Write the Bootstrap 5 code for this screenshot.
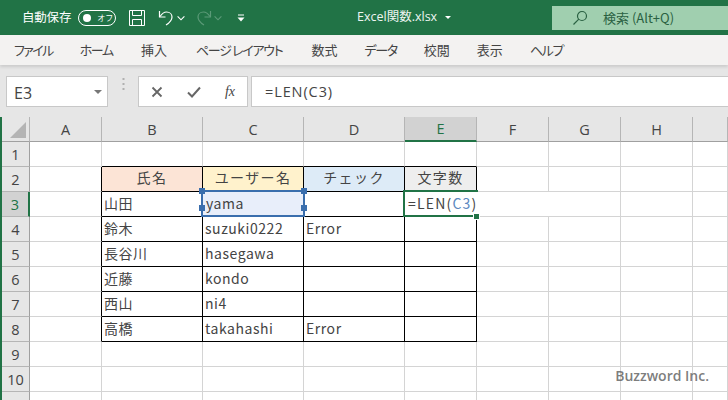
<!DOCTYPE html>
<html lang="ja">
<head>
<meta charset="utf-8">
<title>Excel</title>
<link href="https://cdn.jsdelivr.net/npm/bootstrap@5.3.0/dist/css/bootstrap.min.css" rel="stylesheet">
<style>
html,body{height:400px;overflow:hidden;background:#fff}
body{font-family:"Noto Sans CJK JP","Noto Sans",sans-serif;color:#444}
.frame{width:728px;height:400px;overflow:hidden}
.titlebar{height:35px;background:#217346;color:#fff;font-size:13px}
.ttl-left{width:357px;padding-left:22px}
.ttl-file{width:195px;font-family:"Open Sans","Noto Sans CJK JP",sans-serif;font-size:12.5px;color:#eef5f1;white-space:nowrap}
.file-caret{display:inline-block;width:0;height:0;border-left:3.5px solid transparent;border-right:3.5px solid transparent;border-top:3.5px solid #fff;margin-left:8px;vertical-align:middle}
.srch{width:176px;height:24px;background:#a0cfaf;color:#2a6142;font-size:13px}
.srch-ico{margin:0 15px 0 20px}
.autosave{font-size:12.5px;color:#fff;letter-spacing:-.2px}
.toggle{width:38px;height:16px;border:1px solid #fff;border-radius:8px;margin:0 13px 0 7px;padding-left:4px;font-size:8px}
.knob{width:8px;height:8px;border-radius:50%;background:#fff;margin-right:6px}
.ic-undo{margin-left:13px}.ic-c1{margin-left:1px}.ic-redo{margin-left:9px}.ic-c2{margin-left:2px}.ic-more{margin-left:15px}
.tabsbar{height:30px;background:#f3f2f1;font-size:13px;color:#444;padding-left:14px;gap:27px;white-space:nowrap;box-shadow:0 2px 3px rgba(0,0,0,.12);position:relative;z-index:1;font-feature-settings:"palt"}
.kana{letter-spacing:-1.3px}
.kana-first{letter-spacing:-1.6px}
.gp1{margin-left:1px}.gp2{margin-left:2px}
.fbar{height:52px;background:#e6e6e6;padding:11px 0 0 6px;align-items:flex-start}
.fbox{height:31px;background:#fff;border:1px solid #c8c8c8}
.namebox{width:102px;font-family:"Open Sans",sans-serif;font-size:16px;color:#444;padding:3px 0 0 7px}
.caret-d{width:0;height:0;border-left:4px solid transparent;border-right:4px solid transparent;border-top:4px solid #777;margin:-3px 5px 0 0}
.dots{width:30px;height:16px}
.fnbox{width:110px;padding:0 12px;margin-right:3px;justify-content:space-between}
.fx{font-family:"Liberation Serif",serif;font-style:italic;font-size:14px;color:#444}
.formula{flex:1 1 auto;font-family:"Open Sans",sans-serif;font-size:14.5px;color:#444;padding-left:13px;border-right:0;letter-spacing:.9px}
.sheetwrap{border-left:2px solid #217346;position:relative}
.sheet{border-collapse:separate;border-spacing:0;table-layout:fixed;width:726px;font-size:14px}
.sheet th,.sheet td{height:25px;padding:0 0 2px 2px;border-right:1px solid #d4d4d4;border-bottom:1px solid #d4d4d4;line-height:21px;white-space:nowrap;overflow:hidden;letter-spacing:.55px}
.sheet thead th{background:#e6e6e6;border-right:1px solid #b5b5b5;border-bottom:1px solid #a0a0a0;text-align:center;font-weight:400;font-family:"Open Sans",sans-serif;font-size:14.5px;color:#444;padding:0;letter-spacing:0}
.sheet tbody th{background:#e6e6e6;border-right:1px solid #a0a0a0;border-bottom:1px solid #b5b5b5;text-align:center;font-weight:400;font-family:"Open Sans",sans-serif;font-size:14.5px;color:#444;padding:0;letter-spacing:0}
.sheet thead th.corner{position:relative}
.corner-tri{position:absolute;right:3px;bottom:3px;width:0;height:0;border-left:16px solid transparent;border-bottom:16px solid #b4b4b4}
.sheet thead th.on{background:#d2d2d2;color:#217346;border-bottom:2px solid #217346}
.sheet tbody th.on{background:#d2d2d2;color:#217346;border-right:2px solid #217346}
.b-r{border-right-color:#000!important}
.b-b{border-bottom-color:#000!important}
.sheet td.hd{text-align:center;letter-spacing:1.4px;padding:0 0 4px;line-height:20px;color:#444}
.hd-a{background:#fce4d6}.hd-b{background:#fff2cc}.hd-c{background:#ddebf7}.hd-d{background:#eee}
.sel-c{background:#e8eefa}
.sheet td.sel-c{padding-left:3px}
.ref-box{position:absolute;left:199px;top:73px;width:104px;height:27px;border:2px solid #3a6ead;pointer-events:none}
.h{position:absolute;width:6px;height:6px;background:#3a6ead}
.h1{left:-4px;top:-4px}.h2{right:-4px;top:-4px}.h3{left:-4px;bottom:-4px}.h4{right:-4px;bottom:-4px}
.editor-ext{position:absolute;left:475px;top:75px;width:143px;height:24px;background:#fff}
.editor{position:absolute;left:401px;top:73px;width:75px;height:27px;border:2px solid #217346;border-right:0;background:#fff;font-size:14px;line-height:23px;padding-left:3px;white-space:nowrap;color:#444;letter-spacing:1.200px}
.rf{color:#5a88c0}
.fillh{position:absolute;left:472px;top:97px;width:5px;height:5px;background:#217346;outline:1px solid #fff}
.mark-wm{position:absolute;right:19px;top:248px;font-family:"Open Sans",sans-serif;font-weight:600;font-size:14px;color:rgba(90,90,90,.8);white-space:nowrap}
</style>
</head>
<body>
<div class="frame">
  <div class="titlebar d-flex align-items-center">
    <div class="ttl-left d-flex align-items-center">
      <span class="autosave">自動保存</span>
      <span class="toggle d-flex align-items-center"><span class="knob"></span>オフ</span>
      <svg width="16" height="16" viewBox="0 0 16 16" fill="none" stroke="#fff"><path d="M.5.500h15v15H.5z"/><path d="M3.500.500v5h9v-5M3.500 15.500v-6h9v6"/></svg>
      <svg class="ic-undo" width="18" height="18" viewBox="0 0 18 18" fill="none" stroke="#fff" stroke-width="1.200"><path d="M1.500 2v6h6"/><path d="M2 7.500C4 4.500 6 3 8.500 3c3.500 0 5.500 2.500 5.500 5 0 3-2 5.500-6 8"/></svg>
      <svg class="ic-c1" width="8" height="6" viewBox="0 0 8 6" fill="#fff"><path d="M1 1l3 3 3-3 .8.8L4 5.500.2 1.800z"/></svg>
      <svg class="ic-redo" width="18" height="18" viewBox="0 0 18 18" fill="none" stroke="#5c9a78" stroke-width="1.200"><path d="M16.500 2v6h-6"/><path d="M16 7.500C14 4.500 12 3 9.500 3 6 3 4 5.500 4 8c0 3 2 5.500 6 8"/></svg>
      <svg class="ic-c2" width="8" height="6" viewBox="0 0 8 6" fill="#5c9a78"><path d="M1 1l3 3 3-3 .8.8L4 5.500.2 1.800z"/></svg>
      <svg class="ic-more" width="8" height="8" viewBox="0 0 8 8" fill="#fff"><path d="M1 .500h6v1H1zM.500 3.500h7L4 7.500z"/></svg>
    </div>
    <div class="ttl-file">Excel関数.xlsx<span class="file-caret"></span></div>
    <div class="srch d-flex align-items-center">
      <svg class="srch-ico" width="16" height="16" viewBox="0 0 16 16" fill="none" stroke="#2a6142" stroke-width="1.200"><circle cx="10" cy="6" r="4.500"/><path d="M6.800 9.200L1.500 14.500"/></svg>
      <span>検索 (Alt+Q)</span>
    </div>
  </div>
  <div class="tabsbar d-flex align-items-center">
    <span class="kana-first">ファイル</span><span class="kana">ホーム</span><span class="gp1">挿入</span><span class="kana gp2">ページ レイアウト</span><span class="gp2">数式</span><span class="kana">データ</span><span>校閲</span><span>表示</span><span class="kana">ヘルプ</span>
  </div>
  <div class="fbar d-flex">
    <div class="fbox namebox d-flex align-items-center justify-content-between"><span>E3</span><span class="caret-d"></span></div>
    <div class="dots d-flex justify-content-center align-items-center"><svg width="3" height="12" viewBox="0 0 3 12" fill="#b0b0b0"><rect x="0.500" y="0" width="2" height="2"/><rect x="0.500" y="5" width="2" height="2"/><rect x="0.500" y="10" width="2" height="2"/></svg></div>
    <div class="fbox fnbox d-flex align-items-center">
      <svg width="12" height="12" viewBox="0 0 12 12" stroke="#666" stroke-width="1.800" fill="none"><path d="M1.500 1.500l9 9M10.500 1.500l-9 9"/></svg>
      <svg width="14" height="12" viewBox="0 0 14 12" stroke="#666" stroke-width="2" fill="none"><path d="M1 6.500l4 4 8-9"/></svg>
      <span class="fx">fx</span>
    </div>
    <div class="fbox formula d-flex align-items-center">=LEN(C3)</div>
  </div>
  <div class="sheetwrap">
    <table class="sheet">
      <colgroup><col style="width:28px"><col style="width:72px"><col style="width:101px"><col style="width:101px"><col style="width:101px"><col style="width:72px"><col style="width:72px"><col style="width:72px"><col style="width:72px"><col style="width:35px"></colgroup>
      <thead><tr><th class="corner"><span class="corner-tri"></span></th><th>A</th><th>B</th><th>C</th><th>D</th><th class="on">E</th><th>F</th><th>G</th><th>H</th><th></th></tr></thead>
      <tbody>
        <tr><th>1</th><td></td><td class="b-b"></td><td class="b-b"></td><td class="b-b"></td><td class="b-b"></td><td></td><td></td><td></td><td></td></tr>
        <tr><th>2</th><td class="b-r"></td><td class="hd hd-a b-r b-b">氏名</td><td class="hd hd-b b-r b-b">ユーザー名</td><td class="hd hd-c b-r b-b">チェック</td><td class="hd hd-d b-r b-b">文字数</td><td></td><td></td><td></td><td></td></tr>
        <tr><th class="on">3</th><td class="b-r"></td><td class="b-r b-b">山田</td><td class="sel-c b-r b-b">yama</td><td class="b-r b-b"></td><td class="b-r b-b"></td><td></td><td></td><td></td><td></td></tr>
        <tr><th>4</th><td class="b-r"></td><td class="b-r b-b">鈴木</td><td class="b-r b-b">suzuki0222</td><td class="b-r b-b">Error</td><td class="b-r b-b"></td><td></td><td></td><td></td><td></td></tr>
        <tr><th>5</th><td class="b-r"></td><td class="b-r b-b">長谷川</td><td class="b-r b-b">hasegawa</td><td class="b-r b-b"></td><td class="b-r b-b"></td><td></td><td></td><td></td><td></td></tr>
        <tr><th>6</th><td class="b-r"></td><td class="b-r b-b">近藤</td><td class="b-r b-b">kondo</td><td class="b-r b-b"></td><td class="b-r b-b"></td><td></td><td></td><td></td><td></td></tr>
        <tr><th>7</th><td class="b-r"></td><td class="b-r b-b">西山</td><td class="b-r b-b">ni4</td><td class="b-r b-b"></td><td class="b-r b-b"></td><td></td><td></td><td></td><td></td></tr>
        <tr><th>8</th><td class="b-r"></td><td class="b-r b-b">高橋</td><td class="b-r b-b">takahashi</td><td class="b-r b-b">Error</td><td class="b-r b-b"></td><td></td><td></td><td></td><td></td></tr>
        <tr><th>9</th><td></td><td></td><td></td><td></td><td></td><td></td><td></td><td></td><td></td></tr>
        <tr><th>10</th><td></td><td></td><td></td><td></td><td></td><td></td><td></td><td></td><td></td></tr>
        <tr><th>11</th><td></td><td></td><td></td><td></td><td></td><td></td><td></td><td></td><td></td></tr>
      </tbody>
    </table>
    <div class="ref-box"><span class="h h1"></span><span class="h h2"></span><span class="h h3"></span><span class="h h4"></span></div>
    <div class="editor-ext"></div>
    <div class="editor">=LEN(<span class="rf">C3</span>)</div>
    <div class="fillh"></div>
    <div class="mark-wm">Buzzword Inc.</div>
  </div>
</div>
<script src="https://cdn.jsdelivr.net/npm/bootstrap@5.3.0/dist/js/bootstrap.bundle.min.js"></script>
</body>
</html>
